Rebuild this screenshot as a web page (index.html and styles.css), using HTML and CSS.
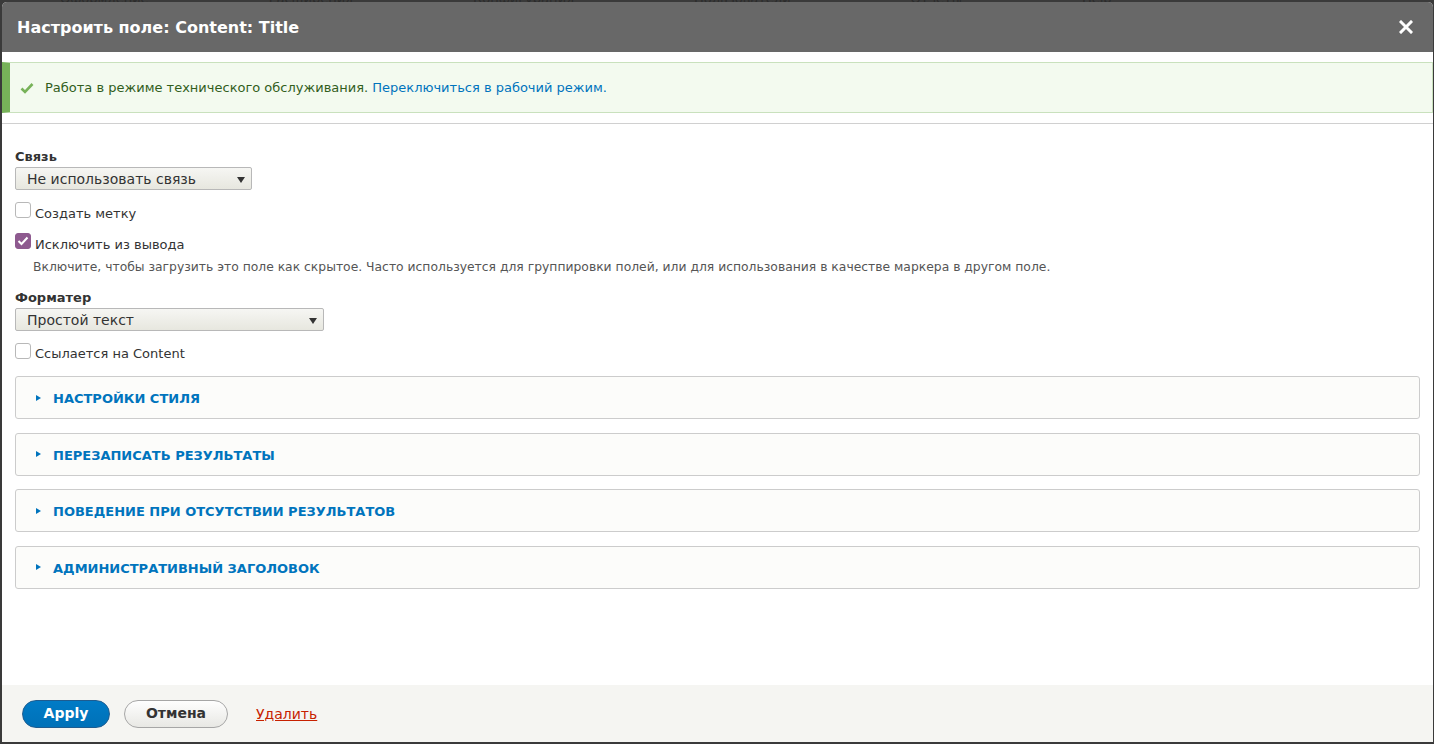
FILE: index.html
```html
<!DOCTYPE html>
<html lang="ru">
<head>
<meta charset="utf-8">
<title>Настроить поле</title>
<link rel="stylesheet" href="styles.css">
</head>
<body>
<div class="backdrop-strip">
  <span>Оформление</span><span>Расширения</span><span>Конфигурация</span><span>Пользователи</span><span>Отчеты</span><span>Help</span>
</div>
<div class="dialog">
  <div class="titlebar">
    <h1 class="title">Настроить поле: Content: Title</h1>
    <button class="close" aria-label="Закрыть">
      <svg width="14" height="14" viewBox="0 0 14 14"><path d="M2 2 L12 12 M12 2 L2 12" stroke="#fff" stroke-width="3" stroke-linecap="square"/></svg>
    </button>
  </div>
  <div class="content">
    <div class="messages-wrap">
      <div class="message">
        <svg class="check" width="14" height="12" viewBox="0 0 14 12"><path d="M1.5 6.5 L5 10 L12.5 2" fill="none" stroke="#77b259" stroke-width="2.6"/></svg>
        <span>Работа в режиме технического обслуживания. <a href="#" class="link">Переключиться в рабочий режим.</a></span>
      </div>
    </div>
    <form class="form">
      <div class="form-item">
        <label class="label">Связь</label>
        <div class="select select-rel"><span>Не использовать связь</span><i class="arrow"></i></div>
      </div>
      <div class="check-item">
        <span class="box"></span><span class="check-label">Создать метку</span>
      </div>
      <div class="check-item check-item-2">
        <span class="box checked"><svg width="12" height="10" viewBox="0 0 12 10"><path d="M1.5 5 L4.5 8 L10.5 1.5" fill="none" stroke="#fff" stroke-width="2"/></svg></span><span class="check-label">Исключить из вывода</span>
      </div>
      <div class="description">Включите, чтобы загрузить это поле как скрытое. Часто используется для группировки полей, или для использования в качестве маркера в другом поле.</div>
      <div class="form-item form-item-2">
        <label class="label">Форматер</label>
        <div class="select select-fmt"><span>Простой текст</span><i class="arrow"></i></div>
      </div>
      <div class="check-item check-item-3">
        <span class="box"></span><span class="check-label">Ссылается на Content</span>
      </div>
      <div class="details-list">
        <div class="details"><i class="tri"></i><span class="summary">Настройки стиля</span></div>
        <div class="details"><i class="tri"></i><span class="summary">Перезаписать результаты</span></div>
        <div class="details"><i class="tri"></i><span class="summary">Поведение при отсутствии результатов</span></div>
        <div class="details"><i class="tri"></i><span class="summary">Административный заголовок</span></div>
      </div>
    </form>
  </div>
  <div class="footer">
    <button class="btn btn-primary">Apply</button>
    <button class="btn btn-secondary">Отмена</button>
    <a href="#" class="delete">Удалить</a>
  </div>
</div>
</body>
</html>
```
FILE: styles.css
```css
html, body {
  margin: 0;
  padding: 0;
}
body {
  background: #3a3a3a;
  font-family: "DejaVu Sans", "Liberation Sans", sans-serif;
  color: #333;
  width: 1434px;
  height: 744px;
  overflow: hidden;
  position: relative;
}
.backdrop-strip {
  position: absolute;
  top: -9px;
  left: 60px;
  display: flex;
  gap: 120px;
  font-size: 13px;
  color: #2a2a2a;
  white-space: nowrap;
}
.dialog {
  position: absolute;
  top: 2px;
  left: 2px;
  width: 1431px;
  height: 740px;
  background: #fff;
  border-radius: 5px 5px 0 0;
  display: flex;
  flex-direction: column;
  overflow: hidden;
}
.titlebar {
  height: 50px;
  flex: none;
  background: #686868;
  display: flex;
  align-items: center;
  justify-content: space-between;
  padding: 0 20px 0 15px;
}
.title {
  margin: 0;
  color: #fff;
  font-size: 16px;
  font-weight: bold;
}
.close {
  background: none;
  border: 0;
  padding: 0;
  width: 14px;
  height: 14px;
  display: flex;
  margin-top: -1px;
}
.content {
  flex: 1;
}
.messages-wrap {
  padding: 10px 0 10px;
  border-bottom: 1px solid #d0d0d0;
}
.message {
  height: 49px;
  background: #f3faef;
  border: 1px solid #c9e1bd;
  border-left: 8px solid #77b259;
  display: flex;
  align-items: center;
  padding-left: 10px;
  font-size: 13px;
  color: #325e1c;
}
.check {
  margin-right: 11px;
  margin-top: 1px;
}
.link {
  color: #0074bd;
  text-decoration: none;
}
.form {
  padding: 25px 13px 0 13px;
}
.label {
  display: block;
  font-size: 13px;
  font-weight: bold;
  color: #333;
  line-height: 16px;
  margin-bottom: 2px;
}
.select {
  height: 21px;
  border: 1px solid #b8b8b8;
  border-radius: 2px;
  background: linear-gradient(#f6f6f3, #e7e7df);
  display: flex;
  align-items: center;
  justify-content: space-between;
  padding: 0 6px 0 11px;
  font-size: 14px;
  color: #333;
  box-sizing: content-box;
}
.select-rel { width: 218px; }
.select-fmt { width: 290px; }
.arrow {
  width: 0;
  height: 0;
  border-left: 4.5px solid transparent;
  border-right: 4.5px solid transparent;
  border-top: 6px solid #333;
  margin-top: 2px;
}
.check-item {
  display: flex;
  align-items: center;
  height: 16px;
  margin-top: 12px;
}
.check-item-2 {
  margin-top: 15px;
}
.box {
  width: 14px;
  height: 14px;
  border: 1px solid #b8b8b8;
  border-radius: 3px;
  background: #fff;
  display: flex;
  align-items: center;
  justify-content: center;
  box-sizing: content-box;
}
.box.checked {
  background: #8e5a8f;
  border-color: #8e5a8f;
}
.check-label {
  font-size: 13px;
  color: #333;
  margin-left: 4px;
  margin-top: 6px;
}
.check-item-3 .check-label {
  margin-top: 4px;
}
.description {
  font-size: 12.35px;
  color: #555;
  margin: 11px 0 0 18px;
  line-height: 15px;
}
.form-item-2 {
  margin-top: 15px;
}
.details-list {
  margin-top: 17px;
  display: flex;
  flex-direction: column;
  gap: 13.67px;
}
.details {
  height: 41px;
  border: 1px solid #ccc;
  border-radius: 3px;
  background: #fcfcfa;
  display: flex;
  align-items: center;
  padding-left: 20px;
}
.tri {
  width: 0;
  height: 0;
  border-top: 3.5px solid transparent;
  border-bottom: 3.5px solid transparent;
  border-left: 5px solid #0074bd;
  margin-right: 12px;
}
.summary {
  color: #0074bd;
  font-weight: bold;
  font-size: 13px;
  text-transform: uppercase;
  padding-top: 2px;
}
.footer {
  flex: none;
  height: 57px;
  background: #f5f5f2;
  display: flex;
  align-items: center;
  padding: 0 20px;
  gap: 14px;
}
.btn {
  height: 28px;
  border-radius: 20px;
  font-family: inherit;
  font-size: 14px;
  font-weight: bold;
  padding: 0 0 1px;
}
.btn-primary {
  width: 88px;
  background: linear-gradient(#007bc6, #0071b8);
  border: 1px solid #1e5c90;
  color: #fff;
}
.btn-secondary {
  width: 104px;
  background: linear-gradient(#fefefe, #e8e8e4);
  border: 1px solid #a6a6a6;
  color: #333;
}
.delete {
  margin-left: 14px;
  color: #c72100;
  font-size: 14px;
  text-decoration: underline;
}
```
